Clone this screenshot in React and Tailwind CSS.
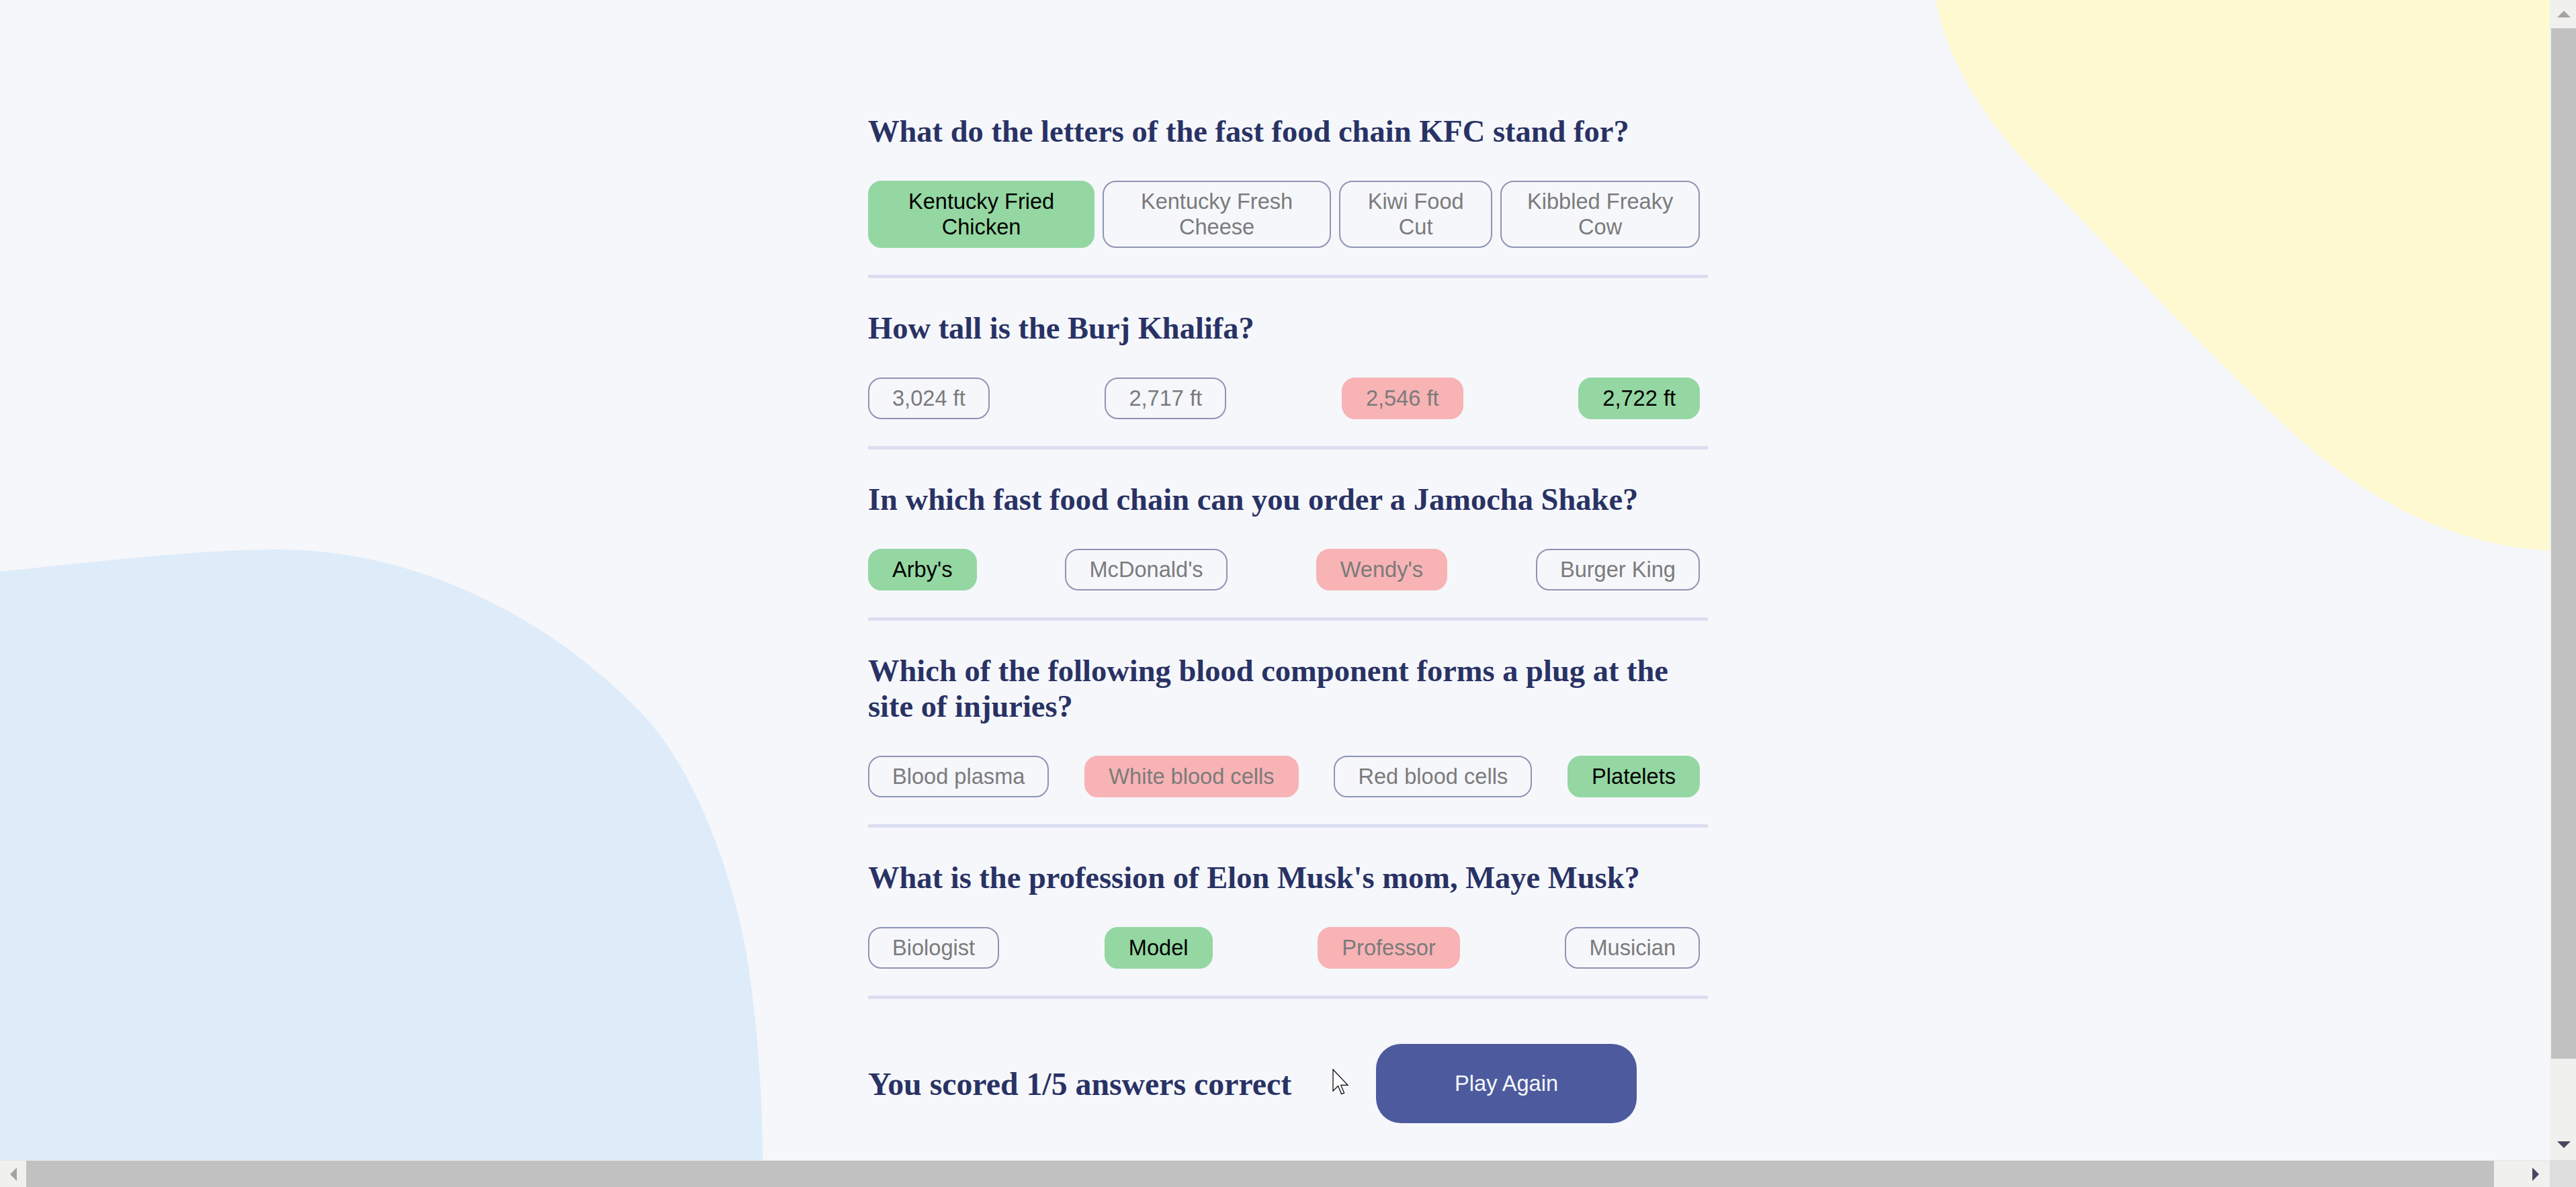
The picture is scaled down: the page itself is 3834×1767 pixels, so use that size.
import React from "react";

const questions = [
  {
    q: "What do the letters of the fast food chain KFC stand for?",
    a: [
      ["Kentucky Fried Chicken", "correct"],
      ["Kentucky Fresh Cheese", "none"],
      ["Kiwi Food Cut", "none"],
      ["Kibbled Freaky Cow", "none"],
    ],
  },
  {
    q: "How tall is the Burj Khalifa?",
    a: [
      ["3,024 ft", "none"],
      ["2,717 ft", "none"],
      ["2,546 ft", "wrong"],
      ["2,722 ft", "correct"],
    ],
  },
  {
    q: "In which fast food chain can you order a Jamocha Shake?",
    a: [
      ["Arby's", "correct"],
      ["McDonald's", "none"],
      ["Wendy's", "wrong"],
      ["Burger King", "none"],
    ],
  },
  {
    q: "Which of the following blood component forms a plug at the site of injuries?",
    a: [
      ["Blood plasma", "none"],
      ["White blood cells", "wrong"],
      ["Red blood cells", "none"],
      ["Platelets", "correct"],
    ],
  },
  {
    q: "What is the profession of Elon Musk's mom, Maye Musk?",
    a: [
      ["Biologist", "none"],
      ["Model", "correct"],
      ["Professor", "wrong"],
      ["Musician", "none"],
    ],
  },
];

function Answer({ text, status }) {
  const base =
    "mr-[12px] rounded-[20px] border-2 px-[34px] py-[10px] text-center font-['Liberation_Sans',Arial,sans-serif] text-[32.6px] leading-[normal]";
  if (status === "correct")
    return <button className={`${base} border-[#94d7a2] bg-[#94d7a2] text-[#000000]`}>{text}</button>;
  if (status === "wrong")
    return <button className={`${base} border-[#f8b3b5] bg-[#f8b3b5] text-[#7b7b7b]`}>{text}</button>;
  return <button className={`${base} border-[#8e94b4] bg-transparent text-[#7b7b7b]`}>{text}</button>;
}

function Question({ q, a, first }) {
  return (
    <section className={first ? "" : "mt-[48px]"}>
      <h2 className="font-['Liberation_Serif','Times_New_Roman',serif] text-[46.5px] font-bold leading-[normal] text-[#293264]">
        {q}
      </h2>
      <div className="mt-[47px] flex justify-between">
        {a.map(([t, s]) => (
          <Answer key={t} text={t} status={s} />
        ))}
      </div>
      <div className="mt-[40px] h-[5px] bg-[#dbdef0]" />
    </section>
  );
}

export default function App() {
  return (
    <div className="grid h-screen w-screen grid-cols-[1fr_39px] grid-rows-[1fr_40px] overflow-hidden bg-[#f5f7fb]">
      <div className="relative overflow-hidden">
        <svg
          className="absolute left-0 top-0"
          width="3795"
          height="1727"
          viewBox="0 0 3795 1727"
        >
          <path
            d="M2881 0 C2900 100 2960 190 3057 285 C3150 380 3300 540 3415 647 C3520 740 3640 810 3795 820 L3795 0 Z"
            fill="#fffad1"
          />
          <path
            d="M0 851 C150 835 300 818 413 818 C620 818 820 920 956 1063 C1020 1130 1080 1260 1109 1409 C1125 1500 1135 1620 1135 1727 L0 1727 Z"
            fill="#deebf8"
          />
        </svg>

        <main className="relative ml-[1292px] w-[1250px] pt-[169px]">
          {questions.map((item, i) => (
            <Question key={i} q={item.q} a={item.a} first={i === 0} />
          ))}
          <div className="mt-[67px] flex items-center gap-[126px]">
            <p className="font-['Liberation_Serif','Times_New_Roman',serif] text-[47.8px] font-bold leading-[normal] text-[#293264]">
              You scored 1/5 answers correct
            </p>
            <button className="rounded-[37px] bg-[#4d5b9e] px-[117px] py-[40px] font-['Liberation_Sans',Arial,sans-serif] text-[32.6px] leading-[normal] text-[#f5f7fb]">
              Play Again
            </button>
          </div>
        </main>

        <svg
          className="absolute left-[1983px] top-[1591px]"
          width="24"
          height="39"
          viewBox="0 0 12 19.5"
        >
          <path
            d="M0.5 0.5 L0.5 16.5 L4.3 12.8 L6.8 18.8 L8.8 18 L6.4 12.2 L11.5 12.2 Z"
            fill="#ffffff"
            stroke="#000000"
            strokeWidth="0.6"
            strokeLinejoin="miter"
          />
        </svg>
      </div>

      {/* vertical scrollbar */}
      <div className="flex flex-col bg-[#f0f0ee]">
        <div className="flex h-[42px] items-center justify-center pl-[2px]">
          <svg width="20" height="10" viewBox="0 0 20 10">
            <path d="M10 0 L20 10 L0 10 Z" fill="#a3a3a3" />
          </svg>
        </div>
        <div className="ml-[2px] h-[1534px] bg-[#c1c1c1]" />
        <div className="flex flex-1 items-end justify-center pb-[18px] pl-[2px]">
          <svg width="20" height="10" viewBox="0 0 20 10">
            <path d="M0 0 L20 0 L10 10 Z" fill="#4a4560" />
          </svg>
        </div>
      </div>

      {/* horizontal scrollbar */}
      <div className="flex items-stretch border-t border-[#e6e6e2] bg-[#f0f0ee]">
        <div className="flex w-[39px] items-center justify-center">
          <svg width="10" height="20" viewBox="0 0 10 20">
            <path d="M10 0 L10 20 L0 10 Z" fill="#a3a3a3" />
          </svg>
        </div>
        <div className="w-[3673px] bg-[#c1c1c1]" />
        <div className="flex flex-1 items-center justify-end pr-[16px]">
          <svg width="10" height="20" viewBox="0 0 10 20">
            <path d="M0 0 L10 10 L0 20 Z" fill="#4a4560" />
          </svg>
        </div>
      </div>

      <div className="bg-[#dcdddc]" />
    </div>
  );
}
